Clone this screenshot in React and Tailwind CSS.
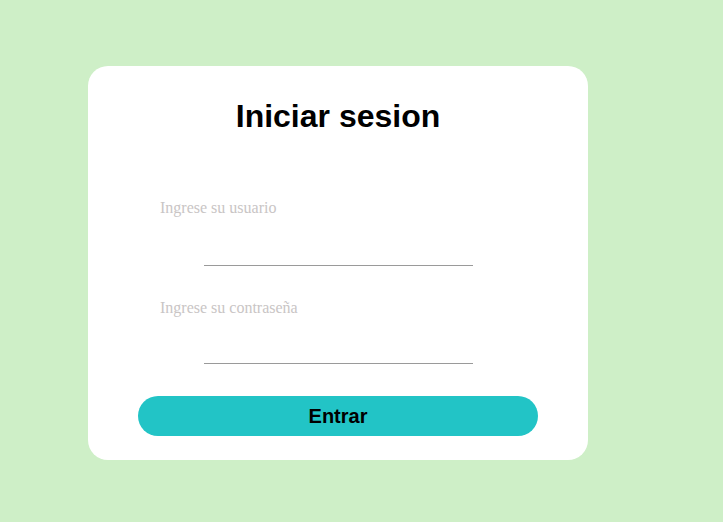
export default function App() {
  return (
    <div className="min-h-[522px] w-full bg-[#ceefc7] pt-[66px] pl-[88px]">
      <div className="w-[500px] h-[394px] rounded-[20px] bg-white flex flex-col pt-[32px]">
        <h1 className="text-center text-[32px] leading-[36px] font-bold text-black [font-family:'Liberation_Sans',Arial,sans-serif]">
          Iniciar sesion
        </h1>
        <label className="mt-[65px] ml-[72px] block text-[16px] leading-[18px] text-[#c9c5c5] [font-family:'Liberation_Serif','Times_New_Roman',serif]">
          Ingrese su usuario
        </label>
        <input
          type="text"
          className="mt-[20px] self-center w-[269px] h-[29px] border-0 border-b border-b-[#9a9a9a] outline-none bg-transparent"
        />
        <label className="mt-[33px] ml-[72px] block text-[16px] leading-[18px] text-[#c9c5c5] [font-family:'Liberation_Serif','Times_New_Roman',serif]">
          Ingrese su contraseña
        </label>
        <input
          type="password"
          className="mt-[18px] self-center w-[269px] h-[29px] border-0 border-b border-b-[#9a9a9a] outline-none bg-transparent"
        />
        <button className="mt-[32px] self-center w-[400px] h-[40px] rounded-full bg-[#22c4c6] text-black text-[20px] font-bold [font-family:'Liberation_Sans',Arial,sans-serif]">
          Entrar
        </button>
      </div>
    </div>
  );
}
